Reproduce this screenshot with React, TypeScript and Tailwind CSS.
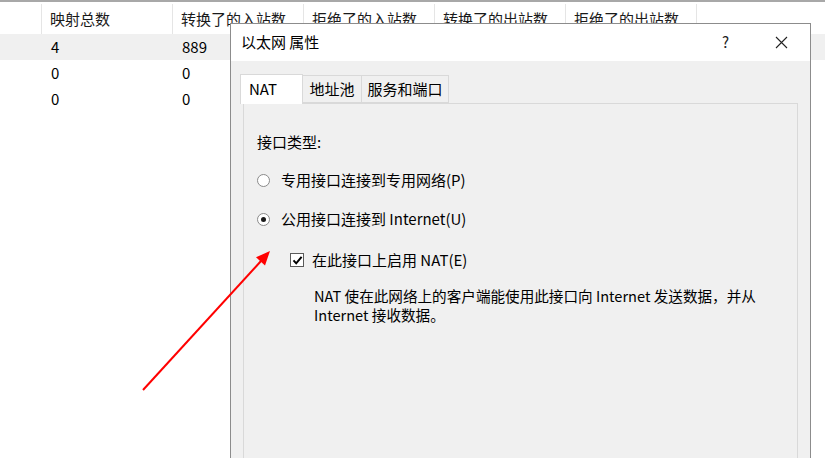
import React from 'react';

const font = { fontFamily: '"Noto Sans CJK SC", "Noto Sans", sans-serif' };

const columns = ['映射总数', '转换了的入站数', '拒绝了的入站数', '转换了的出站数', '拒绝了的出站数'];

const rows = [
  { total: '4', inbound: '889', selected: true },
  { total: '0', inbound: '0', selected: false },
  { total: '0', inbound: '0', selected: false },
];

const Radio: React.FC<{ checked?: boolean }> = ({ checked }) => (
  <span className="flex h-[13px] w-[13px] items-center justify-center rounded-full border border-[#8a8a8a] bg-white">
    {checked && <span className="h-[5px] w-[5px] rounded-full bg-[#1a1a1a]" />}
  </span>
);

const Checkbox: React.FC = () => (
  <span className="flex h-[14px] w-[14px] items-center justify-center border border-[#5a5a5a] bg-white">
    <svg width="11" height="11" viewBox="0 0 11 11">
      <path d="M1.5 5.3 L4.2 8.3 L9.6 1.8" fill="none" stroke="#000" strokeWidth="2" />
    </svg>
  </span>
);

const App: React.FC = () => {
  return (
    <div className="relative h-[458px] w-[825px] overflow-hidden bg-white text-black" style={font}>
      {/* background table */}
      <div className="border-t-[2px] border-[#a8a8a8] pt-px">
        <div className="flex h-[31px] items-center pt-px text-[15px]">
          <div className="h-full w-[42px] border-r border-[#e5e5e5]" />
          {columns.map((c) => (
            <div key={c} className="flex h-full w-[131px] items-center border-r border-[#e5e5e5] pl-[8px] text-[#1a1a1a]">
              {c}
            </div>
          ))}
        </div>
        {rows.map((r, i) => (
          <div key={i} className={`flex h-[26px] items-center text-[15px] ${r.selected ? 'bg-[#f0f0f0]' : ''}`}>
            <div className="w-[42px]" />
            <div className="w-[131px] pl-[9px]">{r.total}</div>
            <div className="w-[131px] pl-[9px]">{r.inbound}</div>
          </div>
        ))}
      </div>

      {/* properties dialog */}
      <div className="absolute left-[230px] top-[23px] flex h-[460px] w-[581px] flex-col border border-[#8c8c8c] bg-[#f0f0f0]">
        <div className="flex h-[37px] items-center bg-white pl-[10px] pr-[22px] text-[15px]">
          <span className="-mt-px">以太网 属性</span>
          <span className="ml-auto mr-[46px] text-[15px] text-[#222]">?</span>
          <svg width="13" height="13" viewBox="0 0 13 13">
            <path d="M1 1 L12 12 M12 1 L1 12" stroke="#222" strokeWidth="1.1" />
          </svg>
        </div>

        <div className="flex flex-1 flex-col px-[12px] pt-[12px]">
          {/* tabs */}
          <div className="flex h-[30px] items-end text-[15px]">
            <div className="relative z-10 -mb-px -ml-[3px] flex h-[30px] w-[63px] items-center border border-b-0 border-[#d9d9d9] bg-white pl-[8px]">
              NAT
            </div>
            <div className="flex h-[28px] w-[59px] items-center justify-center border border-l-0 border-[#d9d9d9]">地址池</div>
            <div className="flex h-[28px] w-[87px] items-center justify-center border border-l-0 border-[#d9d9d9]">服务和端口</div>
          </div>

          {/* panel */}
          <div className="flex-1 border border-[#d9d9d9] bg-[#f0f0f0] pl-[13px] pt-[28px] text-[15px]">
            <div className="leading-[20px]">接口类型:</div>
            <div className="mt-[18px] flex items-center gap-[11px] leading-[20px]">
              <Radio />
              <span>专用接口连接到专用网络(P)</span>
            </div>
            <div className="mt-[19px] flex items-center gap-[11px] leading-[20px]">
              <Radio checked />
              <span>公用接口连接到 Internet(U)</span>
            </div>
            <div className="ml-[33px] mt-[21px] flex items-center gap-[8px] leading-[20px]">
              <Checkbox />
              <span>在此接口上启用 NAT(E)</span>
            </div>
            <div className="ml-[57px] mt-[16px] w-[470px] text-[14.6px] leading-[19px]">
              NAT 使在此网络上的客户端能使用此接口向 Internet 发送数据，并从
              <br />
              Internet 接收数据。
            </div>
          </div>
        </div>
      </div>

      {/* red annotation arrow */}
      <svg className="pointer-events-none absolute left-0 top-0" width="825" height="458">
        <line x1="143" y1="390" x2="261" y2="261" stroke="#ff0000" strokeWidth="2" />
        <polygon points="270,251 265,265.5 256,257.3" fill="#ff0000" />
      </svg>
    </div>
  );
};

export default App;
